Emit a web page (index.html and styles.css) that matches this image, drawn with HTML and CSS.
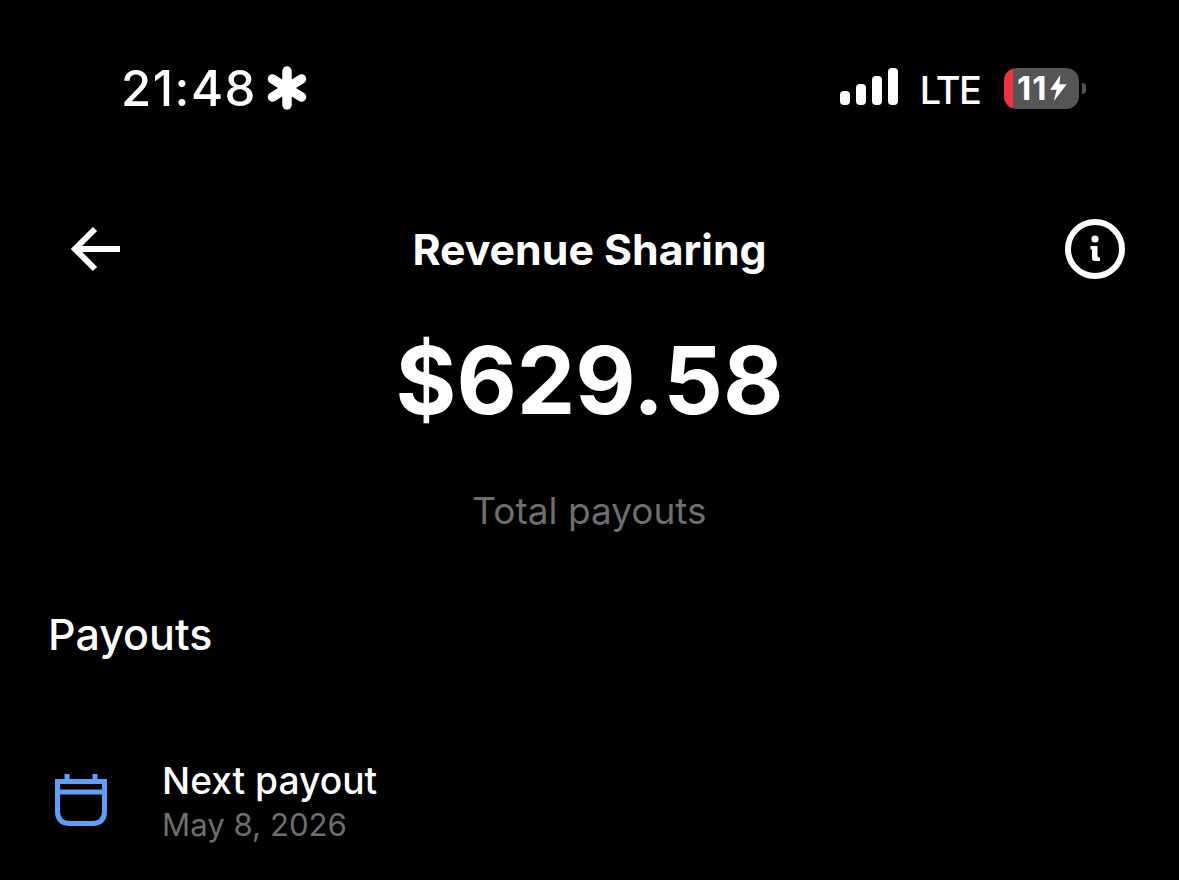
FILE: index.html
```html
<!DOCTYPE html>
<html lang="en">
<head>
  <meta charset="UTF-8">
  <meta name="viewport" content="width=device-width, initial-scale=1.0">
  <title>Revenue Sharing</title>
  <link rel="stylesheet" href="styles.css">
</head>
<body>
  <div class="status-bar">
    <div class="status-left">
      <span class="time">21:48</span>
      <svg class="asterisk" width="40" height="44" viewBox="0 0 40 44">
        <g stroke="#fff" stroke-width="9.5" stroke-linecap="round">
          <line x1="20" y1="5" x2="20" y2="39"/>
          <line x1="5.5" y1="13" x2="34.5" y2="31"/>
          <line x1="34.5" y1="13" x2="5.5" y2="31"/>
        </g>
      </svg>
    </div>
    <div class="status-right">
      <div class="signal">
        <span class="bar bar-1"></span>
        <span class="bar bar-2"></span>
        <span class="bar bar-3"></span>
        <span class="bar bar-4"></span>
      </div>
      <span class="network">LTE</span>
      <div class="battery">
        <div class="battery-body">
          <span class="battery-level"></span>
          <span class="battery-text">11</span>
          <svg class="bolt" width="17" height="26" viewBox="0 0 18 28">
            <path d="M11 0 L0 16 H7 L4 28 L18 10 H10 Z" fill="#fff"/>
          </svg>
        </div>
        <span class="battery-tip"></span>
      </div>
    </div>
  </div>

  <div class="header">
    <svg class="nav-icon back" width="60" height="60" viewBox="0 0 60 60">
      <path d="M54 30 H10 M29 10 L9 30 L29 50" fill="none" stroke="#fff" stroke-width="6"/>
    </svg>
    <div class="header-title">Revenue Sharing</div>
    <svg class="nav-icon info" width="60" height="60" viewBox="0 0 60 60">
      <circle cx="30" cy="30" r="27" fill="none" stroke="#fff" stroke-width="6"/>
      <circle cx="30" cy="20" r="3.6" fill="#fff"/>
      <path d="M25.5 27 H32.5 V37 Q32.5 38.5 35 38.5 V42 H30 Q27 42 27 39 V30.5 H25.5 Z" fill="#fff"/>
    </svg>
  </div>

  <div class="total">
    <div class="total-amount">$629.58</div>
    <div class="total-label">Total payouts</div>
  </div>

  <div class="section-title">Payouts</div>

  <div class="payout-row">
    <svg class="calendar" width="54" height="54" viewBox="0 0 54 54">
      <path d="M3.5 8.5 H50.5 V38 Q50.5 50.5 38 50.5 H16 Q3.5 50.5 3.5 38 Z M3.5 19 H50.5 M13 1 V8 M41 1 V8" fill="none" stroke="#5f9ff5" stroke-width="5"/>
    </svg>
    <div class="payout-text">
      <div class="payout-title">Next payout</div>
      <div class="payout-date">May 8, 2026</div>
    </div>
  </div>
</body>
</html>
```

FILE: styles.css
```css
:root {
  --bg: #000;
  --text-color: #fff;
  --muted: #6e6e6e;
  --battery-grey: #555;
  --battery-red: #ef3340;
}

body {
  margin: 0;
  padding: 0;
  height: 880px;
  overflow: hidden;
  background-color: var(--bg);
  color: var(--text-color);
  font-family: "Inter", "Liberation Sans", sans-serif;
}

.status-bar {
  display: flex;
  align-items: center;
  justify-content: space-between;
  height: 44px;
  padding: 66px 93px 0 121px;
}

.status-left {
  display: flex;
  align-items: center;
  gap: 10px;
}

.time {
  padding-top: 2px;
  font-size: 49px;
  font-weight: 500;
  letter-spacing: 1.5px;
  line-height: 44px;
}

.status-right {
  display: flex;
  align-items: center;
}

.signal {
  display: flex;
  align-items: flex-end;
  gap: 6px;
  height: 37px;
  margin-right: 22px;
  margin-bottom: 3px;
}

.bar {
  width: 10px;
  border-radius: 4px;
  background-color: var(--text-color);
}

.bar-1 { height: 14px; }
.bar-2 { height: 21px; }
.bar-3 { height: 29px; }
.bar-4 { height: 37px; }

.network {
  padding-top: 4px;
  font-size: 38px;
  font-weight: 500;
  letter-spacing: -1.8px;
  line-height: 44px;
  margin-right: 24px;
}

.battery {
  display: flex;
  align-items: center;
  gap: 3px;
}

.battery-body {
  display: flex;
  align-items: center;
  box-sizing: border-box;
  position: relative;
  overflow: hidden;
  width: 75px;
  height: 41px;
  padding-left: 13px;
  border-radius: 13px;
  background-color: var(--battery-grey);
}

.battery-level {
  position: absolute;
  left: 0;
  top: 0;
  bottom: 0;
  width: 9px;
  background-color: var(--battery-red);
}

.battery-text {
  font-size: 33px;
  font-weight: 700;
  letter-spacing: 1px;
  line-height: 41px;
}

.bolt {
  margin-left: 3px;
}

.battery-tip {
  width: 4px;
  height: 11px;
  border-radius: 0 6px 6px 0;
  background-color: var(--battery-grey);
}

.header {
  display: grid;
  grid-template-columns: 1fr auto 1fr;
  align-items: center;
  margin-top: 109px;
  padding: 0 54px;
  height: 60px;
}

.back {
  margin-left: 12px;
}

.info {
  justify-self: end;
}

.header-title {
  font-size: 42.8px;
  font-weight: 700;
}

.total {
  display: flex;
  flex-direction: column;
  align-items: center;
  margin-top: 43px;
}

.total-amount {
  font-size: 93px;
  font-weight: 700;
  line-height: 116px;
}

.total-label {
  margin-top: 51px;
  font-size: 37px;
  line-height: 44px;
  color: var(--muted);
}

.section-title {
  margin-top: 77px;
  padding-left: 48px;
  font-size: 43px;
  font-weight: 500;
  line-height: 48px;
}

.payout-row {
  display: flex;
  align-items: center;
  margin-top: 101px;
  padding-left: 54px;
}

.calendar {
  margin-right: 54px;
  margin-bottom: 6px;
}

.payout-title {
  font-size: 37.2px;
  font-weight: 500;
  line-height: 44px;
}

.payout-date {
  font-size: 31.2px;
  line-height: 44px;
  color: var(--muted);
}
```
